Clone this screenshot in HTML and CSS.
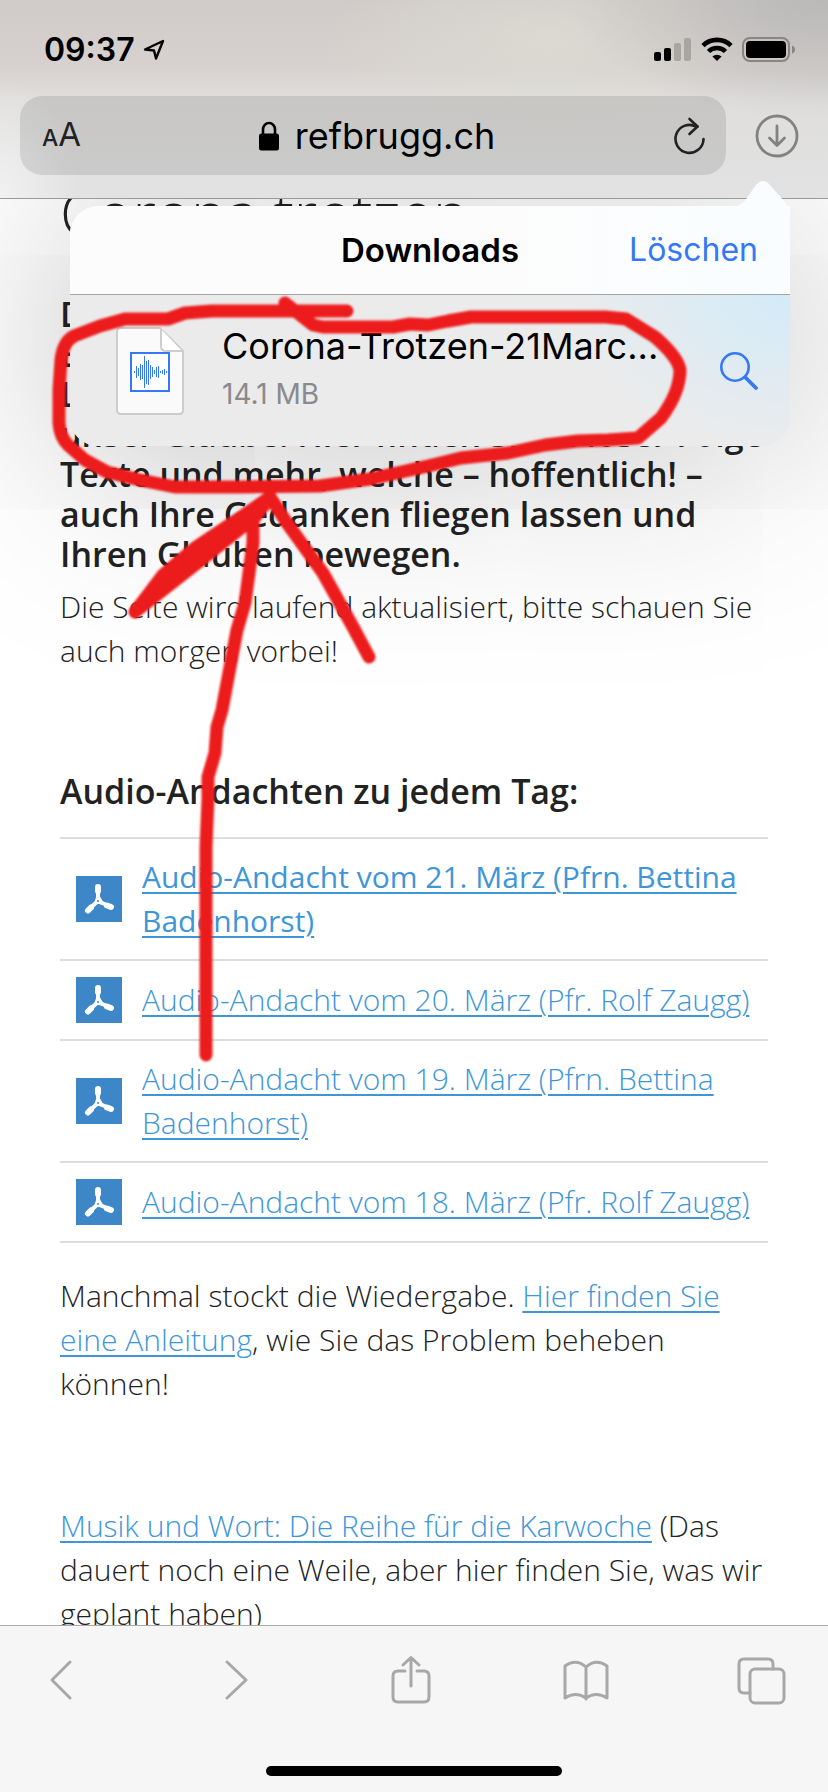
FILE: index.html
```html
<!DOCTYPE html>
<html lang="de">
<head>
<meta charset="utf-8">
<meta name="viewport" content="width=device-width, initial-scale=1">
<title>Corona trotzen</title>
<link rel="stylesheet" href="styles.css">
</head>
<body>
<svg class="defs" width="0" height="0" aria-hidden="true">
  <symbol id="pdf" viewBox="0 0 46 46">
    <g fill="none" stroke="#fff" stroke-linecap="round" stroke-linejoin="round">
      <path d="M22 11V24M22 25L12 34M22 25L35 31" stroke-width="4"/>
      <path d="M22 11V15M15 31.500L12 34.500M31 29.500L35 31" stroke-width="6"/>
      <path d="M22 20L20 26L26 27Z" stroke-width="3"/>
    </g>
    <circle cx="22" cy="25" r="1" fill="#3d87c9"/>
  </symbol>
</svg>
<div class="screen">
  <header class="top">
    <div class="status">
      <div class="clock">
        <span>09:37</span>
        <svg width="22" height="22" viewBox="0 0 22 22" fill="none" stroke="#000" stroke-width="2.400" stroke-linejoin="round"><path d="M20 2L2 10.500L11 11.500L13 19.500Z"/></svg>
      </div>
      <div class="signals">
        <svg width="38" height="26" viewBox="0 0 38 26"><rect y="15" width="7" height="9" rx="2"/><rect x="10" y="11" width="7" height="13" rx="2"/><g fill="#a9a5a3"><rect x="20" y="6" width="7" height="18" rx="2"/><rect x="30" y="1" width="7" height="23" rx="2"/></g></svg>
        <svg width="32" height="26" viewBox="0 0 32 26"><g fill="none" stroke="#000" stroke-width="4.600"><path d="M2 8.600A20 20 0 0 1 30 8.600"/><path d="M7.500 14.500A12 12 0 0 1 24.500 14.500"/></g><path d="M16 24L11.400 19.600A6.500 6.500 0 0 1 20.600 19.600Z"/></svg>
        <svg width="54" height="26" viewBox="0 0 54 26"><rect x="1" y="1" width="46" height="23" rx="7" fill="none" stroke="#888583" stroke-width="2"/><rect x="4" y="4" width="40" height="17" rx="4"/><path d="M50 8.500Q53 9.500 53 12.500T50 16.500Z" fill="#888583"/></svg>
      </div>
    </div>
    <div class="bar">
      <div class="field">
        <button class="aa" type="button" aria-label="Textgröße"><span class="small-a">A</span><span>A</span></button>
        <button class="url" type="button">
          <svg width="20" height="30" viewBox="0 0 20 30"><path d="M4 14V8.500A6 6.500 0 0 1 16 8.500V14" fill="none" stroke="#000" stroke-width="2.600"/><rect y="12.500" width="20" height="17" rx="2.500"/></svg>
          <span>refbrugg.ch</span>
        </button>
        <button class="reload" type="button" aria-label="Neu laden">
          <svg width="32" height="38" viewBox="0 0 32 38" fill="none" stroke="#222" stroke-width="2.600" stroke-linecap="round" stroke-linejoin="round"><path d="M29.500 22A14 14 0 1 1 22 9.500H23.500"/><path d="M15.500 2L23.500 9.500L15.500 17"/></svg>
        </button>
      </div>
      <button class="dl" type="button" aria-label="Downloads">
        <svg width="44" height="44" viewBox="0 0 44 44" fill="none" stroke="#828282" stroke-width="2.800" stroke-linecap="round" stroke-linejoin="round"><circle cx="22" cy="22" r="20"/><path d="M22 12V31M14.500 24L22 31.500L29.500 24"/></svg>
      </button>
    </div>
  </header>

  <main class="page">
    <h1>Corona trotzen</h1>
    <p class="lead">D<br>E<br>L<br>unser Glaube. Hier finden Sie in loser Folge Texte und mehr, welche – hoffentlich! – auch Ihre Gedanken fliegen lassen und Ihren Glauben bewegen.</p>
    <p>Die Seite wird laufend aktualisiert, bitte schauen Sie auch morgen vorbei!</p>
    <h2>Audio-Andachten zu jedem Tag:</h2>
    <ul class="files">
      <li><svg class="pdf"><use href="#pdf"/></svg><a class="new" href="#">Audio-Andacht vom 21. März (Pfrn. Bettina Badenhorst)</a></li>
      <li><svg class="pdf"><use href="#pdf"/></svg><a href="#">Audio-Andacht vom 20. März (Pfr. Rolf Zaugg)</a></li>
      <li><svg class="pdf"><use href="#pdf"/></svg><a href="#">Audio-Andacht vom 19. März (Pfrn. Bettina Badenhorst)</a></li>
      <li><svg class="pdf"><use href="#pdf"/></svg><a href="#">Audio-Andacht vom 18. März (Pfr. Rolf Zaugg)</a></li>
    </ul>
    <p class="hint">Manchmal stockt die Wiedergabe. <a href="#">Hier finden Sie eine Anleitung</a>, wie Sie das Problem beheben können!</p>
    <p class="series"><a href="#">Musik und Wort: Die Reihe für die Karwoche</a> (Das dauert noch eine Weile, aber hier finden Sie, was wir geplant haben)</p>
    <div class="shade"></div>
  </main>

  <footer class="toolbar">
    <nav class="tools">
      <button type="button" aria-label="Zurück"><svg viewBox="0 0 48 48"><path d="M33 5L15 23L33 41"/></svg></button>
      <button type="button" aria-label="Vorwärts"><svg viewBox="0 0 48 48"><path d="M15 5L34 23L15 41"/></svg></button>
      <button type="button" aria-label="Teilen"><svg viewBox="0 0 48 48"><path d="M18 14H11Q6 14 6 19V40Q6 45 11 45H37Q42 45 42 40V19Q42 14 37 14H30M24 29V1M16 8L24 0.500L32 8"/></svg></button>
      <button type="button" aria-label="Lesezeichen"><svg viewBox="0 0 48 48"><path d="M24 10V42M24 10Q14 1 3 9V41Q14 34 24 41Q34 34 45 41V9Q34 1 24 10Z"/></svg></button>
      <button type="button" aria-label="Tabs"><svg viewBox="0 0 48 48"><path d="M13 36H7Q2 36 2 31V7Q2 2 7 2H31Q36 2 36 7V12"/><rect x="13" y="12" width="34" height="34" rx="5"/></svg></button>
    </nav>
    <div class="home"></div>
  </footer>

  <section class="popover" aria-label="Downloads">
    <svg class="arrow" width="60" height="40" viewBox="0 0 60 40"><path d="M0 27Q8 27 14 22L26 5Q33-3 40 5L53 20Q60 28 60 40H0Z" fill="#fafdff"/></svg>
    <div class="pop-head">
      <h3>Downloads</h3>
      <button class="clear" type="button">Löschen</button>
    </div>
    <div class="item">
      <svg width="68" height="88" viewBox="0 0 68 88">
        <path d="M5 1H44L67 24V83Q67 87 63 87H5Q1 87 1 83V5Q1 1 5 1Z" fill="#fafafa" stroke="#cdcdcd" stroke-width="2"/>
        <path d="M45 2V19Q45 24 50 24H66" fill="#fff" stroke="#cdcdcd" stroke-width="2"/>
        <rect x="15" y="26" width="38" height="38" fill="#fff" stroke="#3478f6" stroke-width="2"/>
        <path d="M18.500 44V46M20.500 39V51M22.500 41V49M24.500 37V53M26.500 38V52M28.500 29V61M30.500 34V57M32.500 33V58M34.500 38V52M36.500 40V50M38.500 43V47M40.500 40V50M42.500 39V51M44.500 44V46M46.500 43V47M48.500 42V48M50.500 44V46" stroke="#3478f6" stroke-width="1"/>
      </svg>
      <div class="info">
        <span class="name">Corona-Trotzen-21Marc...</span>
        <span class="size">14.1 MB</span>
      </div>
      <button class="find" type="button" aria-label="Anzeigen"><svg width="38" height="38" viewBox="0 0 38 38" fill="none" stroke="#3478f6" stroke-linecap="round"><circle cx="15" cy="15" r="13.700" stroke-width="2.600"/><path d="M25.500 25.500L36 36" stroke-width="3.800"/></svg></button>
    </div>
  </section>

  <svg class="ink" viewBox="0 0 828 1792" aria-hidden="true">
    <g fill="none" stroke="#ed1c1c" stroke-width="13" stroke-linecap="round" stroke-linejoin="round">
      <path d="M347 311H212L185 313L168 319L125 319L100 326L74 336Q63 342 61 360L59 390V423Q60 437 68 445L85 460L107 472L140 480L175 487H240L320 486L370 479L428 466L461 458L508 453L545 445L578 441L608 440L638 438L661 418Q680 392 680 370Q678 357 655 337L626 319L605 317H471L448 321L428 325L410 324L393 327H323L313 325L285 303"/>
      <path d="M270 497L287 523L323 573L353 627L369 657"/>
      <path d="M270 497L250 511L195 548L163 575L135 612L200 561L256 516Z" fill="#ed1c1c"/>
      <path d="M253 515V543L245 603L237 630L222 710L217 727L215 753L208 777V800L207 823L206 847V1055"/>
    </g>
  </svg>
</div>
</body>
</html>
```
FILE: styles.css
```css
* { box-sizing: border-box; }
body {
  margin: 0;
  background: #fff;
  color: #222;
  font-family: "Open Sans", "Noto Sans", sans-serif;
  font-weight: 300;
  font-size: 30px;
  line-height: 44px;
}
h1, h2, h3, p, ul { margin: 0; padding: 0; }
button { border: 0; padding: 0; background: none; font: inherit; color: inherit; }
svg { display: block; flex: none; }
.defs { position: absolute; }
.screen {
  position: relative;
  display: flex;
  flex-direction: column;
  height: 100vh;
  overflow: hidden;
}

.top {
  flex: none;
  border-bottom: 1px solid #999;
  font-family: Inter, "Liberation Sans", sans-serif;
  font-weight: 400;
  color: #000;
  background:
    radial-gradient(ellipse 260px 120px at 100% 0, rgba(180, 180, 180, .8), transparent),
    radial-gradient(ellipse 80px 120px at 0 100%, rgba(245, 245, 245, .8), transparent),
    radial-gradient(ellipse 220px 100px at 66% 20%, rgba(222, 221, 212, .7), transparent),
    linear-gradient(#d0cbc8, #d7d2cf 35%, #dfdedd 50%, #e2e2e2);
}
.status {
  display: flex;
  justify-content: space-between;
  align-items: center;
  height: 96px;
  padding: 4px 32px 0 44px;
}
.clock { display: flex; align-items: center; gap: 8px; font-size: 32px; font-weight: 600; }
.signals { display: flex; align-items: center; gap: 9px; }
.bar { display: flex; align-items: center; gap: 29px; padding: 0 29px 23px 20px; }
.field {
  flex: 1;
  display: flex;
  align-items: center;
  justify-content: space-between;
  height: 79px;
  padding: 0 20px 0 22px;
  border-radius: 22px;
  background: rgba(0, 0, 0, .1);
}
.aa { display: flex; align-items: baseline; width: 38px; font-size: 33px; color: #222; }
.small-a { font-size: 23px; font-weight: 500; }
.url { display: flex; align-items: center; gap: 16px; font-size: 36px; }
.reload { width: 32px; }

.page {
  position: relative;
  flex: 1;
  min-height: 0;
  overflow: hidden;
  padding: 0 60px;
}
h1 { margin-bottom: 67px; font-size: 60px; line-height: 28px; font-weight: 300; }
.lead, h2 { font-size: 34px; line-height: 40px; font-weight: 600; }
.lead { margin-bottom: 11px; }
h2 { margin: 98px 0 26px; }
a { color: #3e96d9; text-decoration-thickness: 2px; text-underline-offset: 4px; }
.files { list-style: none; border-top: 2px solid #ddd; }
.files li {
  display: flex;
  align-items: center;
  gap: 20px;
  padding: 16px;
  border-bottom: 2px solid #ddd;
}
.new { font-weight: 400; }
.pdf { width: 46px; height: 46px; background: #3d87c9; }
.hint { margin-top: 31px; }
.series { margin-top: 98px; }
.shade {
  position: absolute;
  inset: 7px 38px auto 70px;
  height: 240px;
  border-radius: 28px;
  background: rgba(0, 0, 0, .1);
  box-shadow: 0 10px 220px rgba(0, 0, 0, .28);
}

.toolbar { flex: none; padding: 31px 0 16px; border-top: 1px solid #aaa; background: #f6f6f6; }
.tools { display: flex; justify-content: space-between; padding: 0 43px 0 37px; }
.tools svg {
  width: 48px;
  height: 48px;
  overflow: visible;
  fill: none;
  stroke: #a8a8a8;
  stroke-width: 3;
  stroke-linecap: round;
  stroke-linejoin: round;
}
.home { width: 296px; height: 10px; margin: 61px auto 0; border-radius: 5px; background: #000; }

.popover {
  position: absolute;
  top: 206px;
  left: 70px;
  right: 38px;
  border-radius: 28px 0 28px 28px;
  background: #ebebec;
  font-family: Inter, "Liberation Sans", sans-serif;
  font-weight: 400;
  color: #000;
}
.arrow { position: absolute; top: -26px; right: 0; }
.pop-head {
  display: grid;
  grid-template-columns: 1fr auto 1fr;
  align-items: center;
  height: 89px;
  padding: 0 32px;
  border-bottom: 1px solid #a3a6a8;
  border-radius: 28px 0 0 0;
  background: linear-gradient(90deg, #fcfcfc 60%, #f9fdff);
}
h3 { grid-column: 2; font-size: 33px; font-weight: 600; }
.clear { justify-self: end; font-size: 32px; color: #3478f6; }
.item {
  display: flex;
  align-items: center;
  height: 151px;
  padding: 0 32px 0 46px;
  border-radius: 0 0 28px 28px;
  background: radial-gradient(ellipse 220px 150px at 100% 0, #d3ebf8, #ebebec);
}
.info { flex: 1; display: flex; flex-direction: column; padding: 0 0 5px 38px; }
.name { font-size: 36px; line-height: 52px; white-space: nowrap; }
.size { font-size: 28px; color: #8a8a8d; }

.ink { position: absolute; top: 0; left: 0; width: 100%; filter: blur(1px); pointer-events: none; }
```
